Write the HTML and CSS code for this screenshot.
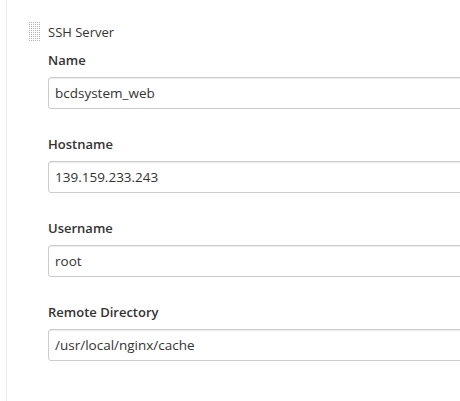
FILE: index.html
```html
<!DOCTYPE html>
<html>
<head>
<meta charset="utf-8">
<link rel="stylesheet" href="styles.css">
</head>
<body>
<div class="panel">
  <div class="header">
    <svg class="handle" width="12" height="20" viewBox="0 0 12 20">
      <defs>
        <pattern id="dots" width="2" height="2" patternUnits="userSpaceOnUse">
          <rect x="0" y="0" width="1" height="1" fill="#b5b5b5"/>
        </pattern>
      </defs>
      <rect x="0" y="0" width="12" height="20" fill="url(#dots)"/>
    </svg>
    <span class="title">SSH Server</span>
  </div>
  <div class="fields">
    <div class="field">
      <label class="label">Name</label>
      <div class="input">bcdsystem_web</div>
    </div>
    <div class="field">
      <label class="label">Hostname</label>
      <div class="input">139.159.233.243</div>
    </div>
    <div class="field">
      <label class="label">Username</label>
      <div class="input">root</div>
    </div>
    <div class="field">
      <label class="label">Remote Directory</label>
      <div class="input">/usr/local/nginx/cache</div>
    </div>
  </div>
</div>
</body>
</html>
```
FILE: styles.css
```css
html, body {
  margin: 0;
  padding: 0;
  background: #fff;
  overflow: hidden;
}
body {
  font-family: "Open Sans", "Noto Sans", sans-serif;
  font-size: 13px;
  color: #333;
  width: 460px;
  height: 401px;
}
.panel {
  margin-left: 6px;
  border-left: 1px solid #e6ecee;
  height: 401px;
  box-sizing: border-box;
  padding-top: 22px;
  overflow: hidden;
}
.header {
  display: flex;
  align-items: flex-start;
  padding-left: 22px;
  height: 20px;
}
.handle {
  display: block;
  flex: none;
}
.title {
  margin-left: 7px;
  line-height: 20px;
}
.fields {
  padding-left: 41px;
  padding-top: 8px;
}
.field {
  margin-bottom: 25px;
  width: 500px;
}
.label {
  display: block;
  font-weight: 600;
  line-height: 20px;
  margin-bottom: 7px;
}
.input {
  box-sizing: border-box;
  height: 32px;
  border: 1px solid #ccc;
  border-radius: 3px;
  box-shadow: inset 0 1px 1px rgba(0,0,0,0.075);
  padding: 0 6px;
  font-size: 13.5px;
  line-height: 30px;
}
```
